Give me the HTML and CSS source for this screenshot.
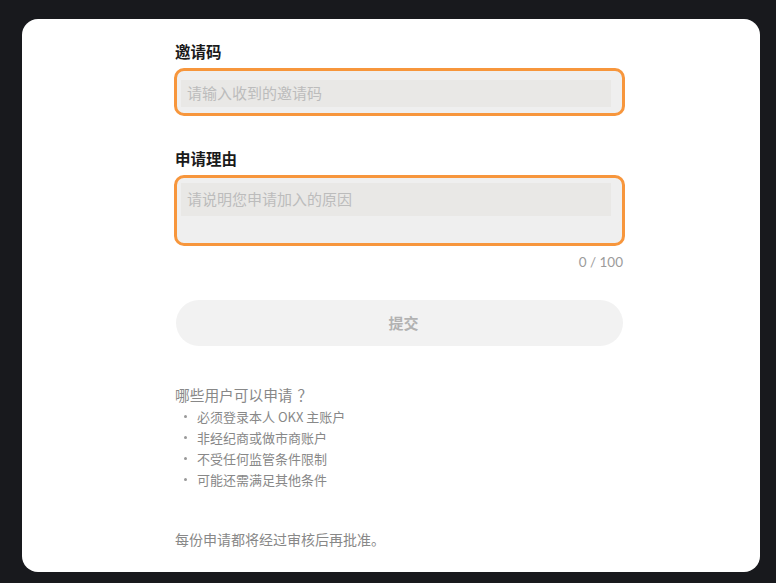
FILE: index.html
```html
<!DOCTYPE html>
<html lang="zh-CN">
<head>
<meta charset="utf-8">
<link rel="stylesheet" href="styles.css">
</head>
<body>
<div class="card">
  <div class="form">
    <div class="label">邀请码</div>
    <div class="box box-input">
      <div class="field">请输入收到的邀请码</div>
    </div>
    <div class="label label2">申请理由</div>
    <div class="box box-area">
      <div class="field field-area">请说明您申请加入的原因</div>
    </div>
    <div class="counter">0 / 100</div>
    <div class="btn">提交</div>
    <div class="who">哪些用户可以申请<span class="q">？</span></div>
    <ul class="list">
      <li>必须登录本人 OKX 主账户</li>
      <li>非经纪商或做市商账户</li>
      <li>不受任何监管条件限制</li>
      <li>可能还需满足其他条件</li>
    </ul>
    <div class="note">每份申请都将经过审核后再批准。</div>
  </div>
</div>
</body>
</html>
```
FILE: styles.css
```css
* { box-sizing: border-box; }
html, body { margin: 0; padding: 0; }
body {
  background: #18191d;
  font-family: "Noto Sans CJK SC", "Noto Sans", sans-serif;
  width: 776px;
  height: 583px;
  overflow: hidden;
}
.card {
  margin: 19px 16px 0 22px;
  height: 553px;
  background: #ffffff;
  border-radius: 16px;
  padding: 21px 0 0 152px;
}
.form {
  width: 451px;
  display: flex;
  flex-direction: column;
}
.label {
  font-size: 15.5px;
  line-height: 22px;
  font-weight: 700;
  color: #1a1a1a;
  padding-left: 1px;
}
.label2 { margin-top: 31px; }
.box {
  border: 3px solid #f7963c;
  border-radius: 10px;
  background: #efefef;
  margin-top: 6px;
  padding: 9px 11px 0 4px;
}
.box-input { height: 48px; }
.box-area { height: 71px; margin-top: 6px; padding-top: 5px; }
.field {
  background: #e9e8e6;
  height: 27px;
  font-size: 15px;
  line-height: 26px;
  color: #bcbcbc;
  padding-left: 6px;
}
.field-area { height: 33px; line-height: 32px; }
.counter {
  margin-top: 7px;
  text-align: right;
  font-size: 13.5px;
  line-height: 18px;
  color: #9b9b9b;
  padding-right: 2px;
  font-family: "Lato", "Noto Sans", sans-serif;
}
.btn {
  margin-top: 29px;
  margin-left: 2px;
  width: 447px;
  height: 46px;
  border-radius: 23px;
  background: #f2f2f2;
  color: #b2b2b2;
  font-size: 15px;
  font-weight: 700;
  display: flex;
  align-items: center;
  justify-content: center;
  padding-left: 8px;
  padding-bottom: 1px;
}
.who {
  margin-top: 39px;
  padding-left: 1px;
  font-size: 14.7px;
  line-height: 20px;
  color: #888888;
}
.q {
  display: inline-block;
  padding-left: 5px;
}
.list {
  list-style: none;
  margin: 1px 0 0 0;
  padding: 0 0 0 10px;
}
.list li {
  font-size: 13px;
  line-height: 21px;
  color: #888888;
  display: flex;
  align-items: center;
}
.list li::before {
  content: "";
  width: 3px;
  height: 3px;
  border-radius: 50%;
  background: #999999;
  margin-right: 10px;
  flex: none;
}
.note {
  margin-top: 39px;
  padding-left: 1px;
  font-size: 14px;
  line-height: 20px;
  color: #888888;
}
```
